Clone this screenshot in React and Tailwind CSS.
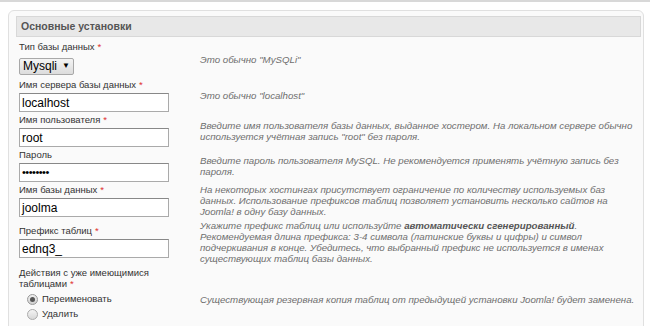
import React from 'react'

const Req = () => <span className="text-[#e03030] ml-[3px]">*</span>

function Field({ label, req, value, desc }) {
  return (
    <>
      <div className="min-h-[33px]">
        <div className="text-[9.5px] leading-[12px] text-[#333]">{label}{req && <Req />}</div>
        <div className="mt-[2px] w-[150px] h-[19px] border border-[#aaa] border-t-[#888] bg-white px-[2px] flex items-center text-[12px] text-black">{value}</div>
      </div>
      <div className="text-[9.7px] leading-[11px] italic text-[#6e6e6e]">{desc}</div>
    </>
  )
}

export default function App() {
  return (
    <div className="w-[650px] h-[326px] overflow-hidden bg-white font-['Liberation_Sans',Arial,sans-serif]">
      <div className="h-[2px] bg-[#d8d8d8]" />
      <div className="ml-[8px] mr-[6px] mt-[8px] h-[340px] border border-[#e0e0e0] rounded-[6px] bg-[#fafafa] pl-[7px] pr-[2px] pt-[5px]">
        <div className="h-[21px] border border-[#d8d8d8] bg-[#e8e8e8] flex items-center px-[4px] text-[10.5px] font-bold text-[#555]">
          Основные установки
        </div>
        <div className="mt-[4px] pl-[3px] grid grid-cols-[181px_1fr] gap-y-[2px] items-center">
          <div className="min-h-[33px]">
            <div className="text-[9.5px] leading-[12px] text-[#333]">Тип базы данных<Req /></div>
            <div className="mt-[1px] inline-flex items-center h-[17px] px-[3px] border border-[#a8a8a8] rounded-[2px] bg-gradient-to-b from-[#f4f4f4] to-[#dcdcdc] text-[12px] text-black">
              Mysqli<span className="ml-[5px] text-[8px]">▼</span>
            </div>
          </div>
          <div className="text-[9.7px] leading-[11px] italic text-[#6e6e6e]">Это обычно "MySQLi"</div>

          <Field label="Имя сервера базы данных" req value="localhost" desc={'Это обычно "localhost"'} />
          <Field label="Имя пользователя" req value="root"
            desc={'Введите имя пользователя базы данных, выданное хостером. На локальном сервере обычно используется учётная запись "root" без пароля.'} />
          <Field label="Пароль" value={<span className="text-[11px] tracking-[-0.5px]">••••••••</span>}
            desc="Введите пароль пользователя MySQL. Не рекомендуется применять учётную запись без пароля." />
          <Field label="Имя базы данных" req value="joolma"
            desc="На некоторых хостингах присутствует ограничение по количеству используемых баз данных. Использование префиксов таблиц позволяет установить несколько сайтов на Joomla! в одну базу данных." />
          <Field label="Префикс таблиц" req value="ednq3_"
            desc={<span className="block pt-[1px]">Укажите префикс таблиц или используйте <b className="text-[#555]">автоматически сгенерированный</b>. Рекомендуемая длина префикса: 3-4 символа (латинские буквы и цифры) и символ подчеркивания в конце. Убедитесь, что выбранный префикс не используется в именах существующих таблиц базы данных.</span>} />

          <div className="text-[9.5px] leading-[11px] text-[#333] w-[150px] pt-[1px]">Действия с уже имеющимися таблицами<Req /></div>
          <div />
          <div className="pl-[8px] pt-[1px]">
            <label className="flex items-center h-[15px] text-[9.5px] text-[#333]">
              <span className="w-[11px] h-[11px] rounded-full border border-[#999] bg-gradient-to-b from-[#f0f0f0] to-[#d0d0d0] flex items-center justify-center mr-[4px]">
                <span className="w-[5px] h-[5px] rounded-full bg-[#555]" />
              </span>
              Переименовать
            </label>
            <label className="flex items-center h-[15px] text-[9.5px] text-[#333]">
              <span className="w-[11px] h-[11px] rounded-full border border-[#aaa] bg-gradient-to-b from-[#f4f4f4] to-[#d8d8d8] mr-[4px]" />
              Удалить
            </label>
          </div>
          <div className="self-start pt-[3px] text-[9.7px] leading-[11px] italic text-[#6e6e6e]">Существующая резервная копия таблиц от предыдущей установки Joomla! будет заменена.</div>
        </div>
      </div>
    </div>
  )
}
